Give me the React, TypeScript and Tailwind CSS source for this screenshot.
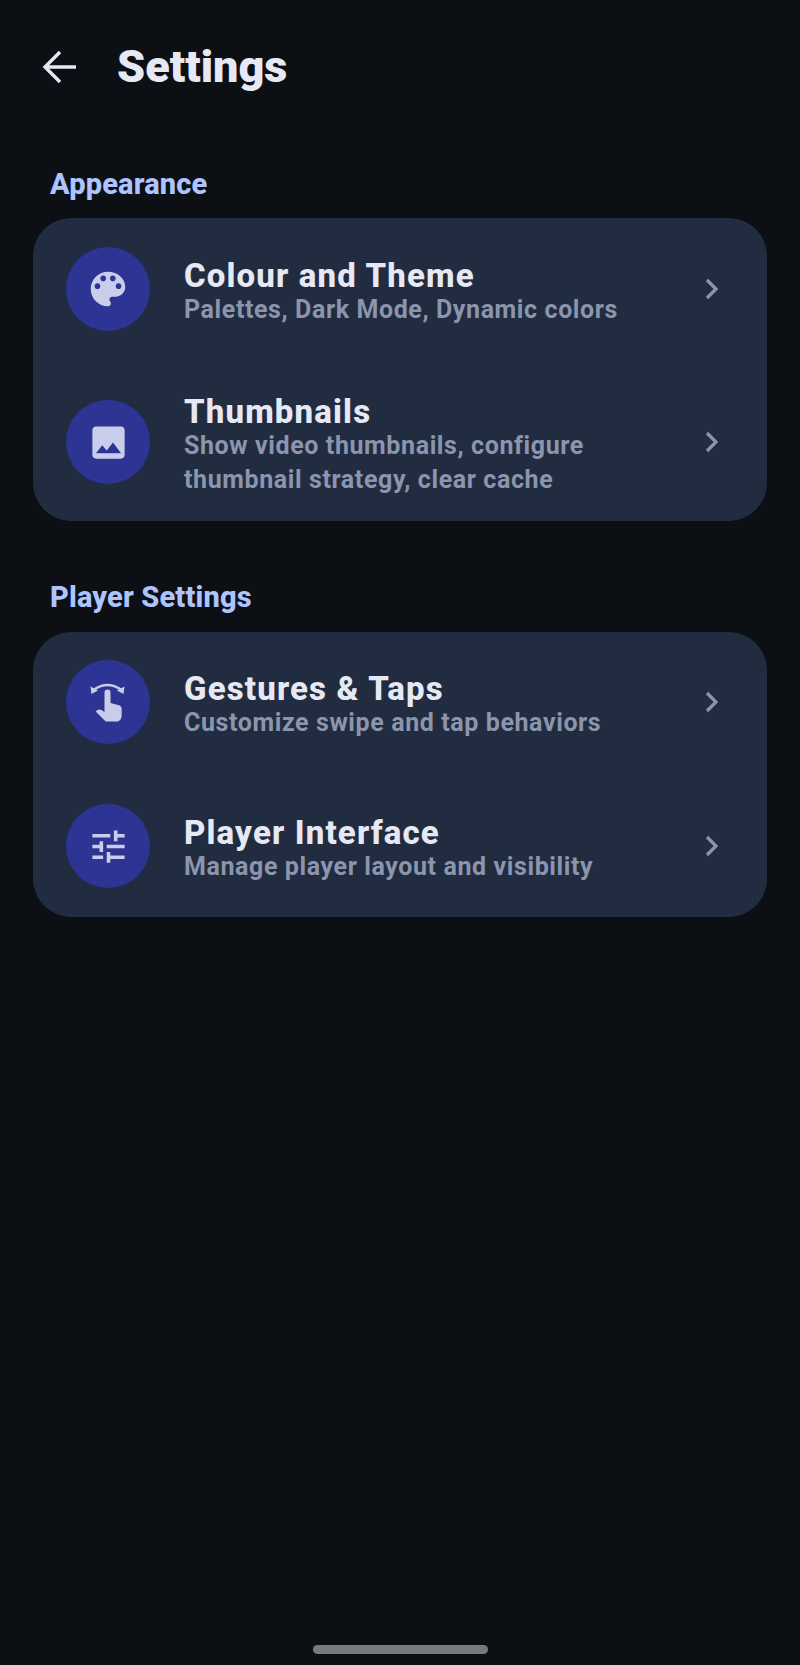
import React from "react";

const Palette = () => (
  <svg viewBox="0 0 24 24" className="w-[46px] h-[46px]" fill="#c9cdea">
    <path d="M12 3c-4.97 0-9 4.03-9 9s4.03 9 9 9c.83 0 1.5-.67 1.5-1.5 0-.39-.15-.74-.39-1.01-.23-.26-.38-.61-.38-.99 0-.83.67-1.5 1.5-1.5H16c2.76 0 5-2.24 5-5 0-4.42-4.03-8-9-8zm-5.5 9c-.83 0-1.5-.67-1.5-1.5S5.67 9 6.5 9 8 9.67 8 10.5 7.33 12 6.5 12zm3-4C8.67 8 8 7.33 8 6.5S8.67 5 9.5 5s1.5.67 1.5 1.5S10.33 8 9.5 8zm5 0c-.83 0-1.5-.67-1.5-1.5S13.67 5 14.5 5s1.5.67 1.5 1.5S15.33 8 14.5 8zm3 4c-.83 0-1.5-.67-1.5-1.5S16.67 9 17.5 9s1.5.67 1.5 1.5-.67 1.5-1.5 1.5z" />
  </svg>
);
const ImageIcon = () => (
  <svg viewBox="0 0 24 24" className="w-[43px] h-[43px]" fill="#c9cdea">
    <path d="M21 19V5c0-1.1-.9-2-2-2H5c-1.1 0-2 .9-2 2v14c0 1.1.9 2 2 2h14c1.1 0 2-.9 2-2zM8.5 13.5l2.5 3.01L14.5 12l4.5 6H5l3.5-4.5z" />
  </svg>
);
const Tune = () => (
  <svg viewBox="0 0 24 24" className="w-[43px] h-[43px]" fill="#c9cdea">
    <path d="M3 17v2h6v-2H3zM3 5v2h10V5H3zm10 16v-2h8v-2h-8v-2h-2v6h2zM7 9v2H3v2h4v2h2V9H7zm14 4v-2H11v2h10zm-6-4h2V7h4V5h-4V3h-2v6z" />
  </svg>
);
const Swipe = () => (
  <svg viewBox="0 0 48 48" className="w-[48px] h-[48px]" fill="none">
    <path d="M10 11.5 Q23.5 2.5 37 11.5" stroke="#c9cdea" strokeWidth="2.4" />
    <path d="M6.5 8.5 L7.5 16 L14 12.5 Z M40.5 8.5 L39.5 16 L33 12.5 Z" fill="#c9cdea" />
    <path
      d="M20.5 14.5 a3 3 0 0 1 6 0 V25 L34 27 c2.6 .6 3.7 2 3.7 4.2 V37 c0 4-2 6.5-5 6.5 H23 c-1 0-2-.4-2.6-1.2 L11.7 33.5 L13.2 32.2 c1.4-1 3-1 4.2-.2 L20.5 34 Z"
      fill="#c9cdea"
    />
  </svg>
);
const Chevron = () => (
  <svg width="14" height="22" viewBox="0 0 14 22" fill="none" className="shrink-0">
    <path d="M2 2 L11 11 L2 20" stroke="#8b95ad" strokeWidth="3.2" />
  </svg>
);

function Row({ icon, title, sub, h }: { icon: React.ReactNode; title: string; sub: React.ReactNode; h: string }) {
  return (
    <div className={`flex items-center pl-[33px] pr-[48px] ${h}`}>
      <div className="w-[84px] h-[84px] rounded-full bg-[#2d3494] flex items-center justify-center shrink-0">{icon}</div>
      <div className="flex-1 ml-[34px] pt-[7px]">
        <div className="text-[33px] leading-[34px] font-extrabold tracking-[1.15px] text-[#e6e9f4]">{title}</div>
        <div className="text-[25px] leading-[34px] font-bold tracking-[0.6px] text-[#8b95ad]">{sub}</div>
      </div>
      <Chevron />
    </div>
  );
}

function Section({ label, children, className, gap }: { label: string; children: React.ReactNode; className: string; gap: string }) {
  return (
    <section className={className}>
      <h2 className="px-[50px] text-[29px] leading-[34px] font-extrabold tracking-[0.15px] text-[#adc4ff]">{label}</h2>
      <div className={`mx-[33px] rounded-[38px] bg-[#222c40] ${gap}`}>{children}</div>
    </section>
  );
}

export default function App() {
  return (
    <div className="h-[1665px] flex flex-col bg-[#0c1015] font-['Roboto',sans-serif] overflow-hidden">
      <header className="flex items-center h-[50px] mt-[42px] pl-[42px]">
        <svg width="35" height="34" viewBox="0 0 35 34" fill="none" className="shrink-0">
          <path d="M34 17 H3 M18 2 L3 17 L18 32" stroke="#e6e9f4" strokeWidth="3.4" />
        </svg>
        <h1 className="ml-[40px] text-[45px] leading-[50px] font-black text-[#e6e9f4]">Settings</h1>
      </header>
      <Section label="Appearance" className="mt-[75px]" gap="mt-[17px]">
        <Row h="h-[142px]" icon={<Palette />} title="Colour and Theme" sub="Palettes, Dark Mode, Dynamic colors" />
        <div className="h-[3px]" />
        <Row
          h="h-[158px]"
          icon={<ImageIcon />}
          title="Thumbnails"
          sub={<>Show video thumbnails, configure<br />thumbnail strategy, clear cache</>}
        />
      </Section>
      <Section label="Player Settings" className="mt-[59px]" gap="mt-[18px]">
        <Row h="h-[140px]" icon={<Swipe />} title="Gestures & Taps" sub="Customize swipe and tap behaviors" />
        <div className="h-[3px]" />
        <Row h="h-[142px]" icon={<Tune />} title="Player Interface" sub="Manage player layout and visibility" />
      </Section>
      <div className="mt-auto mb-[11px] mx-auto w-[175px] h-[9px] rounded-full bg-[#77797c]" />
    </div>
  );
}
